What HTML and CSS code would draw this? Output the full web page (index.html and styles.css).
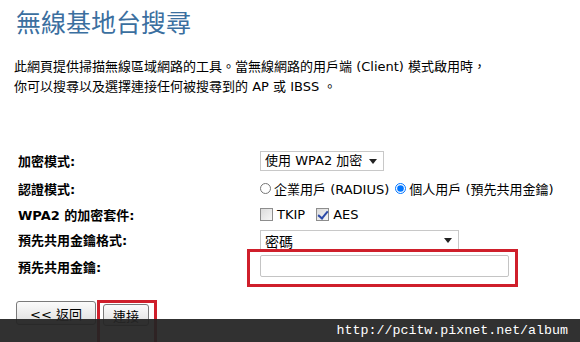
FILE: index.html
```html
<!DOCTYPE html>
<html lang="zh-Hant">
<head>
  <meta charset="UTF-8">
  <title>無線基地台搜尋</title>
  <link rel="stylesheet" href="styles.css">
</head>
<body>

  <h1 class="title">無線基地台搜尋</h1>
  <p class="intro">此網頁提供掃描無線區域網路的工具。當無線網路的用戶端 (Client) 模式啟用時，<br>你可以搜尋以及選擇連接任何被搜尋到的 AP 或 IBSS 。</p>

  <div class="form">
    <div class="label">加密模式:</div>
    <div class="field">
      <span class="select-wrap sel-mode">
        <select><option>使用 WPA2 加密</option></select>
      </span>
    </div>

    <div class="label">認證模式:</div>
    <div class="field">
      <label class="opt"><input type="radio" name="auth"> 企業用戶 (RADIUS)</label>
      <label class="opt"><input type="radio" name="auth" checked> 個人用戶 (預先共用金鑰)</label>
    </div>

    <div class="label">WPA2 的加密套件:</div>
    <div class="field">
      <label class="opt gap"><input type="checkbox"> TKIP</label>
      <label class="opt"><input type="checkbox" checked> AES</label>
    </div>

    <div class="label">預先共用金鑰格式:</div>
    <div class="field">
      <span class="select-wrap sel-format">
        <select><option>密碼</option></select>
      </span>
    </div>

    <div class="label">預先共用金鑰:</div>
    <div class="field">
      <input type="text" class="key">
    </div>
  </div>

  <div class="buttons">
    <button class="btn back">&lt;&lt; 返回</button>
    <button class="btn connect">連接</button>
  </div>

  <!-- annotations drawn over the screenshot -->
  <div class="mark mark-key"></div>
  <div class="mark mark-btn"></div>
  <div class="watermark">http://pcitw.pixnet.net/album</div>

</body>
</html>
```

FILE: styles.css
```css
body { margin: 0; background: #fff; color: #000; font-family: "DejaVu Sans", "Noto Sans CJK TC", sans-serif; font-size: 12px; position: relative; height: 342px; overflow: hidden; }

.title { margin: 0; padding: 6px 0 0 16px; height: 32px; font-family: "Noto Sans CJK TC", sans-serif; font-weight: normal; font-size: 25px; line-height: 30px; color: #3b6f9f; }

.intro { margin: 19px 0 0 14px; line-height: 20px; font-size: 13px; }

.form { display: grid; grid-template-columns: 242px 300px; grid-template-rows: 29px 27px 25px 25px 28px; margin: 49px 0 0 18px; align-items: center; }
.label { font-weight: bold; font-size: 13px; }
.field { display: flex; align-items: center; font-size: 13px; }

.select-wrap { position: relative; display: inline-block; }
.select-wrap select { appearance: none; -webkit-appearance: none; border: 1px solid #c8c8c8; border-radius: 0; background: #fff; font: inherit; font-size: 13px; padding: 0 0 0 4px; height: 20px; margin: 0; color: #000; }
.select-wrap::after { content: ""; position: absolute; right: 7px; top: 8px; border-left: 4px solid transparent; border-right: 4px solid transparent; border-top: 5px solid #222; pointer-events: none; }
.sel-mode select { width: 124px; }
.sel-format select { width: 199px; font-family: "Noto Sans CJK TC", sans-serif; font-size: 14px; }

.opt { display: inline-flex; align-items: center; margin-right: 6px; }
.opt.gap { margin-right: 11px; }
.opt input { margin: 0 3px 0 0; }
.opt input[type="radio"] { width: 11px; height: 11px; }
.opt input[type="checkbox"] { appearance: none; -webkit-appearance: none; width: 13px; height: 13px; border: 1px solid #8d8d8d; background: linear-gradient(135deg, #dcdcdc, #f6f6f6); position: relative; margin-right: 4px; }
.opt input[type="checkbox"]:checked::after { content: ""; position: absolute; left: 3px; top: 0; width: 4px; height: 8px; border: solid #2c4aa8; border-width: 0 2px 2px 0; transform: rotate(40deg); }

.key { width: 249px; height: 22px; border: 1px solid #c4c4c4; border-radius: 2px; padding: 0; margin: 0; box-sizing: border-box; }

.buttons { display: flex; align-items: flex-start; margin: 21px 0 0 16px; }
.btn { font-family: "DejaVu Sans", "Noto Sans CJK TC", sans-serif; font-size: 13px; color: #000; border: 1px solid #7a7a7a; border-radius: 3px; background: linear-gradient(#fbfbfb, #dedede); padding: 0; }
.back { width: 80px; height: 24px; }
.connect { width: 46px; height: 22px; margin: 3px 0 0 7px; }

.mark { position: absolute; border: 3px solid #cf1f2b; }
.mark-key { left: 247px; top: 249px; width: 265px; height: 32px; }
.mark-btn { left: 97px; top: 300px; width: 54px; height: 44px; }

.watermark { position: absolute; left: 0; right: 0; bottom: 0; height: 23px; background: rgba(36, 36, 36, 0.94); color: #fff; font-family: "Liberation Mono", monospace; font-size: 13.3px; line-height: 23px; text-align: right; padding-right: 12px; }
```
